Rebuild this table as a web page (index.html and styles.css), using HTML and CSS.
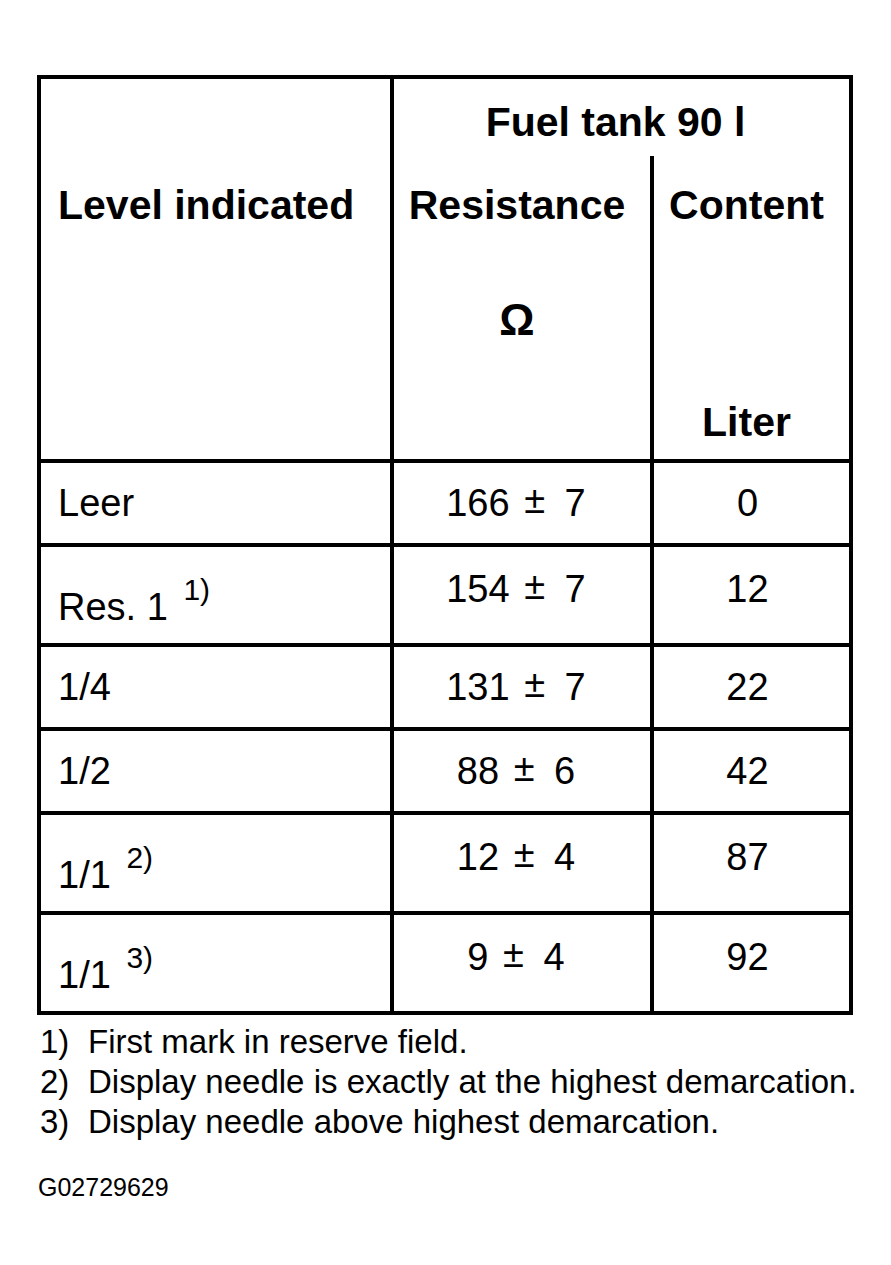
FILE: index.html
```html
<!DOCTYPE html>
<html lang="en">
<head>
<meta charset="utf-8">
<title>Fuel tank 90 l</title>
<link rel="stylesheet" href="styles.css">
</head>
<body>
<div class="sheet">
  <table class="fuel">
    <colgroup>
      <col class="c1">
      <col class="c2">
      <col class="c3">
    </colgroup>
    <thead>
      <tr class="head-a">
        <th rowspan="2" class="h-level">Level indicated</th>
        <th colspan="2" class="h-tank">Fuel tank 90 l</th>
      </tr>
      <tr class="head-b">
        <th class="h-res"><div class="h-line">Resistance</div><div class="ohm">Ω</div></th>
        <th class="h-cont"><div class="h-line">Content</div><div class="unit">Liter</div></th>
      </tr>
    </thead>
    <tbody>
      <tr class="short">
        <td class="lvl">Leer</td>
        <td class="num res">166 <span class="pm">±</span> 7</td>
        <td class="num cont">0</td>
      </tr>
      <tr class="tall">
        <td class="lvl">Res. 1 <sup>1)</sup></td>
        <td class="num res">154 <span class="pm">±</span> 7</td>
        <td class="num cont">12</td>
      </tr>
      <tr class="short">
        <td class="lvl">1/4</td>
        <td class="num res">131 <span class="pm">±</span> 7</td>
        <td class="num cont">22</td>
      </tr>
      <tr class="short">
        <td class="lvl">1/2</td>
        <td class="num res">88 <span class="pm">±</span> 6</td>
        <td class="num cont">42</td>
      </tr>
      <tr class="tall">
        <td class="lvl">1/1 <sup>2)</sup></td>
        <td class="num res">12 <span class="pm">±</span> 4</td>
        <td class="num cont">87</td>
      </tr>
      <tr class="tall">
        <td class="lvl">1/1 <sup>3)</sup></td>
        <td class="num res">9 <span class="pm">±</span> 4</td>
        <td class="num cont">92</td>
      </tr>
    </tbody>
  </table>

  <ol class="notes">
    <li><span class="mark">1)</span><span>First mark in reserve field.</span></li>
    <li><span class="mark">2)</span><span>Display needle is exactly at the highest demarcation.</span></li>
    <li><span class="mark">3)</span><span>Display needle above highest demarcation.</span></li>
  </ol>

  <div class="code">G02729629</div>
</div>
</body>
</html>
```

FILE: styles.css
```css
html, body {
  margin: 0;
  padding: 0;
  background: #ffffff;
}

body {
  font-family: "Liberation Sans", Arial, Helvetica, sans-serif;
  color: #000000;
}

.sheet {
  padding: 75px 0 0 37px;
}

.fuel {
  border-collapse: collapse;
  table-layout: fixed;
  width: 816px;
}

.fuel .c1 { width: 353px; }
.fuel .c2 { width: 260px; }
.fuel .c3 { width: 199px; }

.fuel th,
.fuel td {
  border: 4px solid #000000;
  padding: 0;
}

/* ---------- header ---------- */
.fuel th {
  font-weight: bold;
  font-size: 41px;
  line-height: 48px;
  vertical-align: top;
}

.fuel .h-level {
  text-align: left;
  padding: 102px 0 0 17px;
}

.fuel .h-tank {
  text-align: center;
  border-bottom: none;
  padding: 19px 12px 10px 0;
}

.fuel .head-b th {
  border-top: none;
}

.fuel .h-res,
.fuel .h-cont {
  text-align: center;
  padding: 25px 10px 13px 0;
}

.fuel .ohm {
  font-size: 44px;
  line-height: 48px;
  margin-top: 67px;
  height: 115px;
}

.fuel .unit {
  margin-top: 169px;
}

/* ---------- body ---------- */
.fuel td {
  font-size: 38px;
  vertical-align: middle;
}

.fuel .short td { height: 80px; }
.fuel .tall td { height: 96px; }

.fuel .lvl {
  text-align: left;
  padding-left: 17px;
}

.fuel .num {
  text-align: center;
  white-space: nowrap;
}

.fuel .res { padding-right: 12px; }
.fuel .cont { padding-right: 8px; }

.fuel .tall .num {
  height: 84px;
  padding-bottom: 12px;
}

.fuel .pm {
  position: relative;
  top: -3px;
  margin: 0 9px 0 4px;
}

.fuel .lvl sup {
  font-size: 30px;
  line-height: 57px;
  vertical-align: 20px;
  padding-left: 5px;
}

/* ---------- footnotes ---------- */
.notes {
  list-style: none;
  margin: 7px 0 0 3px;
  padding: 0;
  font-size: 33px;
  line-height: 40px;
}

.notes li {
  display: flex;
}

.notes .mark {
  width: 48px;
  flex: none;
}

.code {
  margin: 32px 0 0 1px;
  font-size: 25px;
  line-height: 26px;
}
```
